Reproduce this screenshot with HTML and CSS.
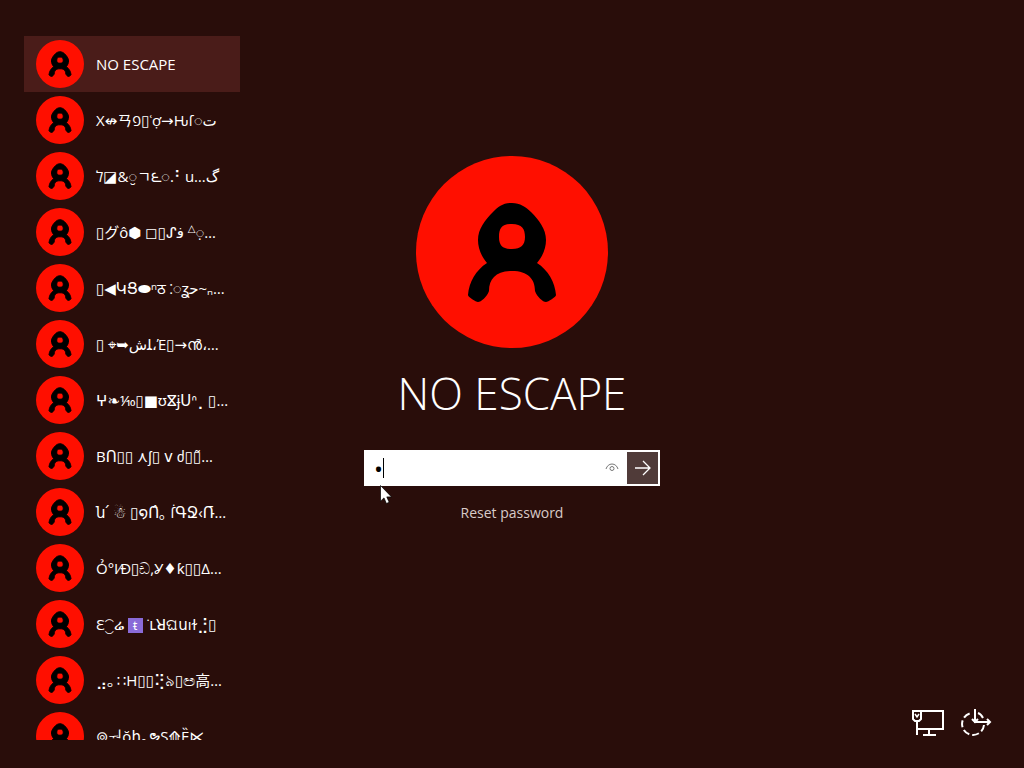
FILE: index.html
```
<!DOCTYPE html>
<html lang="en">
  <head>
    <meta charset="UTF-8" />
    <title>Sign in</title>
    <link rel="stylesheet" href="styles.css">
  </head>
  <body>
    <svg class="defs" aria-hidden="true">
      <symbol id="user" viewBox="0 0 192 192">
        <circle cx="96" cy="96" r="96" fill="#ff0f00" stroke="none" />
        <path fill="#000" fill-rule="evenodd" d="M96 47c8 0 14 4 19 9 8 8 15 17 15 28 0 8-3 16-9 23 11 7 18 19 19 32 0 2-8 7-10 7-3 0-9-5-11-11 0-12-7-20-23-20s-23 8-23 20c-2 6-8 11-11 11-2 0-10-5-10-7 1-13 8-25 19-32-6-7-9-15-9-23 0-11 7-20 15-28 5-5 10-9 18-9zM96 68c-10 0-13 4-13 13s4 12 13 12 13-4 13-12-3-13-13-13z" />
      </symbol>
    </svg>

    <div class="screen">
      <nav class="users" aria-label="Users">
        <button class="user active"><svg class="avatar"><use href="#user" /></svg><span class="name">NO ESCAPE</span></button>
        <button class="user"><svg class="avatar"><use href="#user" /></svg><span class="name">X↮ㄢפ▯ʿợ→Ԋſ◌ﺕ</span></button>
        <button class="user"><svg class="avatar"><use href="#user" /></svg><span class="name">ל◪&amp;◌̮ㄱ౬◌.⠃u…ﮒ</span></button>
        <button class="user"><svg class="avatar"><use href="#user" /></svg><span class="name">▯グô⬢ ◻▯ᔑﻓ <sup>△</sup>◌̣…</span></button>
        <button class="user"><svg class="avatar"><use href="#user" /></svg><span class="name">▯◀ԿՑ⬬ⁿठ ⁚◌ʓﺣ~ₙ…</span></button>
        <button class="user"><svg class="avatar"><use href="#user" /></svg><span class="name">▯ ⌖➥ﺵﻠ،Έ▯→ൻ،…</span></button>
        <button class="user"><svg class="avatar"><use href="#user" /></svg><span class="name">ⵖ❧⅒▯■ʊⴵɉՍᐢ⡀▯…</span></button>
        <button class="user"><svg class="avatar"><use href="#user" /></svg><span class="name">BՈ▯▯ ⋏ʃ▯ ⅴ ძ▯▯̃…</span></button>
        <button class="user"><svg class="avatar"><use href="#user" /></svg><span class="name">ն՛ ☃ ▯໑Ո̂｡ ẛԳՋ‹Ռ̄…</span></button>
        <button class="user"><svg class="avatar"><use href="#user" /></svg><span class="name">Ỏ°I⁄Ð▯ඩ,Ỿ♦ƙ▯▯Δ…</span></button>
        <button class="user"><svg class="avatar"><use href="#user" /></svg><span class="name">Ԑ⁐ሬ <span class="tile">ᵵ</span> ˙ւꓤଘսıɫ⣘▯</span></button>
        <button class="user"><svg class="avatar"><use href="#user" /></svg><span class="name">⣠ₒ ∷H▯▯⢝৯▯ඏ高…</span></button>
        <button class="user"><svg class="avatar"><use href="#user" /></svg><span class="name">⊚ᅯŏհ｡ຯS⟰Ȅ⋉</span></button>
      </nav>

      <main class="login">
        <svg class="avatar-large"><use href="#user" /></svg>
        <h1>NO ESCAPE</h1>
        <form class="password">
          <input type="password" value="x" aria-label="Password">
          <span class="caret"></span>
          <button type="button" class="reveal" aria-label="Show password">
            <svg width="14" height="10" viewBox="0 0 14 10" fill="none" stroke="#777">
              <path d="M1 6C2 3 4 1 7 1s5 2 6 5" />
              <circle cx="7" cy="5.5" r="2" />
            </svg>
          </button>
          <button type="button" class="submit" aria-label="Sign in">
            <svg width="18" height="16" viewBox="0 0 18 16" fill="none" stroke="#fff" stroke-width="1.3">
              <path d="M1 8h15M9 1l7 7-7 7" />
            </svg>
          </button>
          <svg class="pointer" viewBox="0 0 12 19">
            <path fill="#fff" stroke="#000" stroke-width=".7" d="M.5.5v15.7l3.5-3.3 2.4 5.6 2.8-1.2-2.4-5.4h4.7z" />
          </svg>
        </form>
        <a class="reset" href="#">Reset password</a>
      </main>

      <div class="tools">
        <button aria-label="Network">
          <svg width="32" height="28" viewBox="0 0 32 28" fill="none" stroke="#fff" stroke-width="2">
            <path d="M10 2h21v18H6M17 20v5M11 26h13M5 12v14M1 2h8v8l-2 2H3l-2-2z" />
            <path d="M3 5l2 3 2-3" stroke-width="1.5" />
          </svg>
        </button>
        <button aria-label="Ease of access">
          <svg width="32" height="28" viewBox="0 0 32 28" fill="none" stroke="#fff" stroke-width="2">
            <path d="M24 16a11 11 0 1 1-12-12" stroke-dasharray="7 3" />
            <path d="M18 4q3 1 5 5" />
            <path d="M15 0v13h14M12 10l3 3 3-3M27 10l3 3-3 3" />
          </svg>
        </button>
      </div>
    </div>
  </body>
</html>
```
FILE: styles.css
```
* {
  box-sizing: border-box;
}

body {
  background: #290d0a;
  color: #fff;
  font-family: "Open Sans", "Noto Sans", "DejaVu Sans", "Noto Sans CJK JP", sans-serif;
  margin: 0;
}

button {
  background: none;
  border: none;
  color: inherit;
  font: inherit;
  padding: 0;
}

.defs {
  display: none;
}

.screen {
  display: grid;
  grid-template-columns: 216px 1fr 216px;
  height: 100vh;
  padding: 36px 24px 28px;
}

.users {
  overflow: hidden;
}

.user {
  display: flex;
  align-items: center;
  gap: 12px;
  width: 100%;
  height: 56px;
  padding: 0 12px;
  text-align: left;
}

.user.active {
  background: #4a1c19;
}

.avatar {
  flex: none;
  width: 48px;
  height: 48px;
  stroke: #000;
  stroke-width: 4px;
}

.name {
  direction: ltr;
  unicode-bidi: bidi-override;
  font-size: 15px;
  line-height: 22px;
  height: 22px;
  white-space: nowrap;
}

.name sup {
  font-size: 10px;
  line-height: 1;
}

.tile {
  display: inline-block;
  width: 15px;
  background: #8a6bd8;
  font-size: 12px;
  line-height: 15px;
  text-align: center;
}

.login {
  display: flex;
  flex-direction: column;
  align-items: center;
  padding-top: 120px;
}

.avatar-large {
  width: 192px;
  height: 192px;
}

h1 {
  font-size: 44px;
  font-weight: 300;
  line-height: 60px;
  margin: 15px 0 27px;
}

.password {
  position: relative;
  display: flex;
  width: 296px;
  height: 36px;
  background: #fff;
  border: 2px solid #fff;
}

.password input {
  flex: 1;
  min-width: 0;
  border: none;
  outline: none;
  padding: 0 8px;
  font-family: "Open Sans", sans-serif;
  font-size: 24px;
}

.caret {
  position: absolute;
  left: 17px;
  top: 6px;
  width: 1px;
  height: 20px;
  background: #000;
}

.reveal {
  width: 30px;
}

.submit {
  width: 31px;
  background: #503b39;
}

.reveal svg,
.submit svg {
  display: block;
  margin: auto;
}

.pointer {
  position: absolute;
  left: 14px;
  top: 33px;
  width: 12px;
  height: 19px;
}

.reset {
  color: #d8cac8;
  font-size: 14px;
  line-height: 20px;
  margin-top: 17px;
  text-decoration: none;
}

.tools {
  display: flex;
  align-items: flex-end;
  justify-content: flex-end;
  gap: 16px;
  padding: 0 8px 3px;
}

.tools svg {
  display: block;
}
```
